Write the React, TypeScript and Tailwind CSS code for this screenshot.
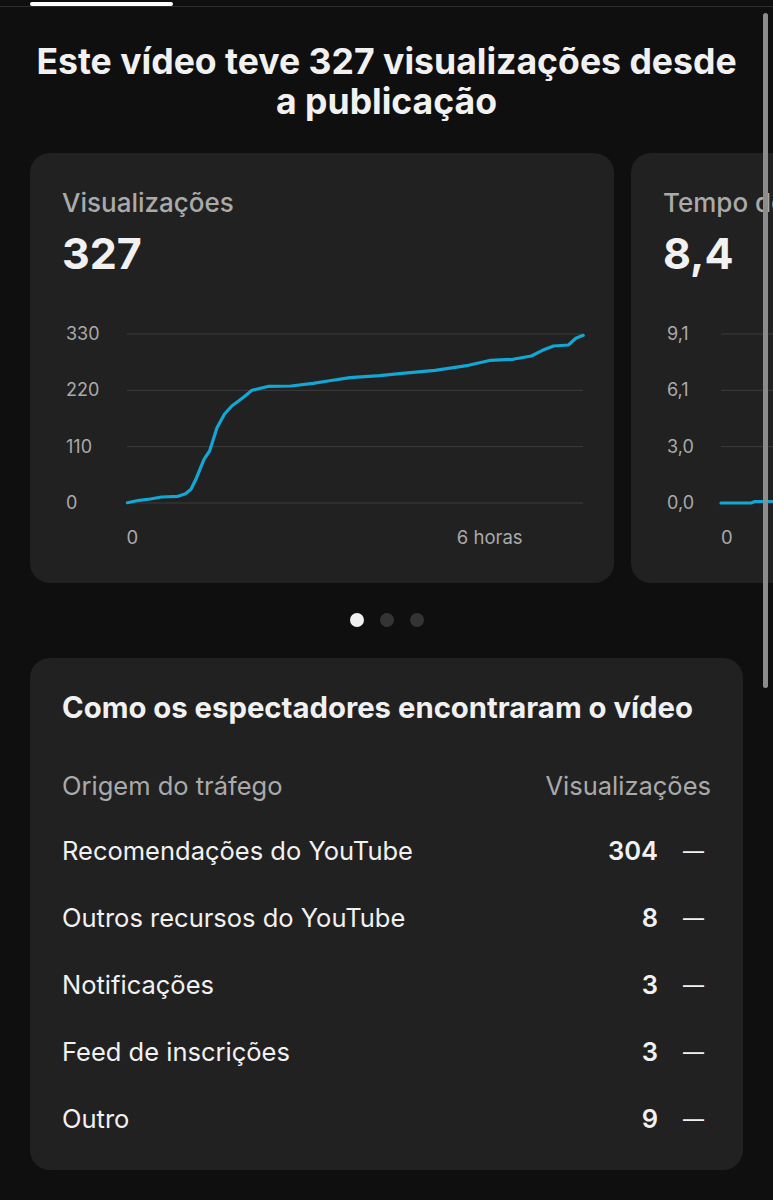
const font = { fontFamily: "Inter, 'Noto Sans', sans-serif" };

const viewsLine =
  "0.4,178.7 12.3,176.3 23.4,175 34.5,173 51,172.3 58.5,169.7 64,165.3 69.6,153.7 77,135.3 82.6,127 90,103.7 97.4,90.3 104.8,82 115.9,73.7 125,66.3 141.8,62.3 164,62 186,59.3 201,57 223,53.7 252.8,51.7 275,49.3 308,46.3 341.5,41.3 363.7,36.3 386,35.3 404.4,32 415.5,26.3 426.6,22 441.4,21 448.8,14.3 456.2,11.3";

const watchLine = "0,179 30,179 34,177.5 60,177.5";

type ChartCardProps = {
  title: string;
  value: string;
  yLabels: string[];
  xEnd: string;
  line: string;
};

function ChartCard({ title, value, yLabels, xEnd, line }: ChartCardProps) {
  const gridY = [10, 66.33, 122.67, 179];
  return (
    <div className="w-[584px] h-[430px] shrink-0 rounded-[20px] bg-[#212121] px-8 pt-[34px]">
      <div className="text-[26px] leading-[32px] font-medium text-[#aaaaaa] whitespace-nowrap">{title}</div>
      <div className="mt-[10px] text-[43px] leading-[48px] font-bold text-[#f1f1f1]">{value}</div>
      <div className="mt-[47px] flex gap-[27px]">
        <div className="flex flex-col justify-between h-[189px] text-[18px] leading-[20px] text-[#aaaaaa] pl-1">
          {yLabels.map((l) => (
            <span key={l}>{l}</span>
          ))}
        </div>
        <div className="flex-1 flex flex-col">
          <svg width="456" height="189" viewBox="0 0 456 189" className="overflow-visible">
            {gridY.map((y) => (
              <line key={y} x1="0" x2="456" y1={y} y2={y} stroke="#3d3d3d" strokeWidth="1" />
            ))}
            <polyline
              points={line}
              fill="none"
              stroke="#12a7d4"
              strokeWidth="3.2"
              strokeLinejoin="round"
              strokeLinecap="round"
            />
          </svg>
          <div className="mt-[14px] flex justify-between pr-[60px] text-[18.5px] leading-[20px] text-[#aaaaaa]">
            <span>0</span>
            <span>{xEnd}</span>
          </div>
        </div>
      </div>
    </div>
  );
}

const sources = [
  { name: "Recomendações do YouTube", views: "304" },
  { name: "Outros recursos do YouTube", views: "8" },
  { name: "Notificações", views: "3" },
  { name: "Feed de inscrições", views: "3" },
  { name: "Outro", views: "9" },
];

export default function App() {
  return (
    <div style={font} className="relative w-[773px] h-[1200px] overflow-hidden bg-[#0f0f0f] text-[#f1f1f1]">
      {/* tab strip */}
      <div className="h-[6px] pt-[2px]">
        <div className="ml-[30px] w-[143px] h-[4px] rounded-full bg-white" />
      </div>
      <div className="h-px bg-[#2c2c2c]" />

      <h1 className="mt-[35px] px-4 text-center text-[35.6px] leading-[40px] font-bold text-[#f1f1f1] whitespace-nowrap">
        Este vídeo teve 327 visualizações desde
        <br />
        a publicação
      </h1>

      <div className="mt-[31px] flex gap-[17px] pl-[30px]">
        <ChartCard
          title="Visualizações"
          value="327"
          yLabels={["330", "220", "110", "0"]}
          xEnd="6 horas"
          line={viewsLine}
        />
        <ChartCard
          title="Tempo de exibição (horas)"
          value="8,4"
          yLabels={["9,1", "6,1", "3,0", "0,0"]}
          xEnd="6 horas"
          line={watchLine}
        />
      </div>

      <div className="mt-[30px] flex justify-center gap-4">
        <span className="w-[14px] h-[14px] rounded-full bg-[#f1f1f1]" />
        <span className="w-[14px] h-[14px] rounded-full bg-[#343434]" />
        <span className="w-[14px] h-[14px] rounded-full bg-[#343434]" />
      </div>

      <section className="mt-[31px] ml-[30px] w-[713px] rounded-[20px] bg-[#212121] px-8 pt-[32px] pb-[17px]">
        <h2 className="text-[29.3px] leading-[36px] font-bold text-[#f1f1f1] whitespace-nowrap">
          Como os espectadores encontraram o vídeo
        </h2>
        <div className="mt-[28px] h-[64px] flex items-center justify-between text-[25.5px] text-[#aaaaaa]">
          <span>Origem do tráfego</span>
          <span>Visualizações</span>
        </div>
        {sources.map((s) => (
          <div key={s.name} className="h-[67px] flex items-center justify-between text-[25.5px]">
            <span className="text-[#f1f1f1]">{s.name}</span>
            <div className="flex items-center gap-[25px] pr-[7px]">
              <span className="font-semibold">{s.views}</span>
              <span className="text-[21px] text-[#f1f1f1]">—</span>
            </div>
          </div>
        ))}
      </section>

      {/* scrollbar */}
      <div className="absolute left-[763px] top-[13px] w-[5px] h-[675px] rounded-full bg-[#8c8c8c]" />
    </div>
  );
}
